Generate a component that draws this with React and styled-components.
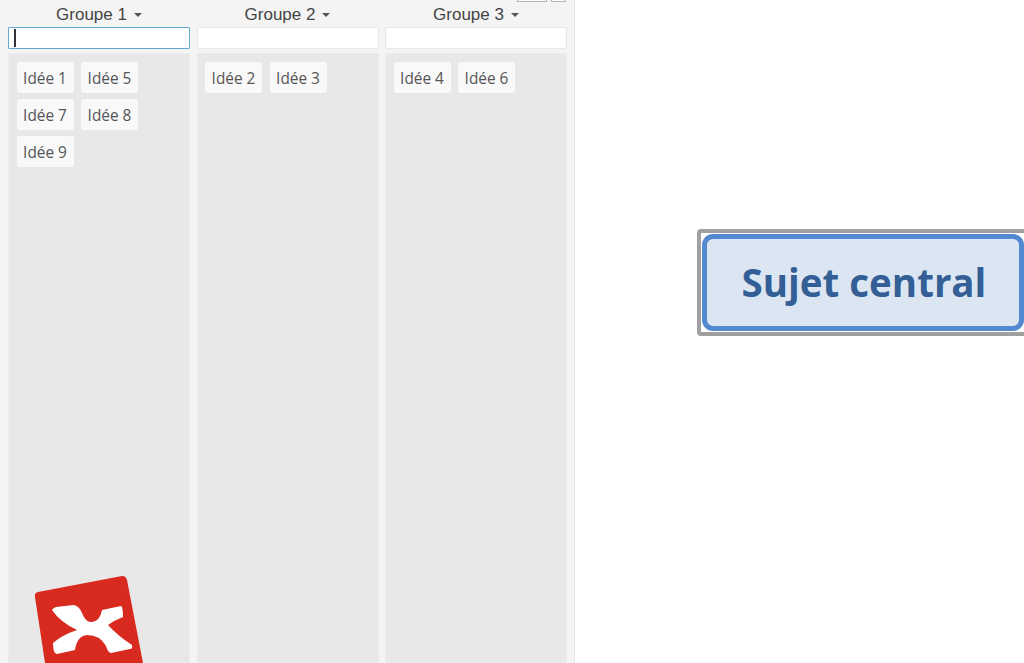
import React from 'react';
import styled, { createGlobalStyle } from 'styled-components';

const GlobalStyle = createGlobalStyle`
  html, body {
    margin: 0;
    padding: 0;
    height: 100%;
    background: #fff;
  }
  body {
    font-family: "Open Sans", "Liberation Sans", sans-serif;
    overflow: hidden;
  }
`

const Page = styled.div`
  display: flex;
  width: 1024px;
  height: 663px;
  overflow: hidden;
`

const Panel = styled.div`
  position: relative;
  box-sizing: border-box;
  flex: none;
  width: 575px;
  height: 663px;
  background: #f4f4f4;
  border-right: 1px solid #e4e4e4;
  padding: 0 8px 0 8px;
  display: flex;
  flex-direction: column;
  overflow: hidden;
`

const TitleStrip = styled.div`
  flex: none;
  height: 2px;
  display: flex;
  justify-content: flex-end;
  gap: 4px;
`

const WindowButton = styled.span`
  box-sizing: border-box;
  width: ${props => props.$width}px;
  height: 2px;
  border: 1px solid #b5b5b5;
  border-top: 0;
  background: #fafafa;
`

const Columns = styled.div`
  flex: 1;
  display: grid;
  grid-template-columns: repeat(3, 182px);
  column-gap: 6.5px;
  min-height: 0;
`

const Column = styled.div`
  display: flex;
  flex-direction: column;
  min-height: 0;
`

const Heading = styled.div`
  flex: none;
  height: 25px;
  display: flex;
  align-items: center;
  justify-content: center;
  gap: 7px;
  font-family: "Liberation Sans", Arial, sans-serif;
  font-size: 17px;
  color: #444;
`

const Caret = styled.span`
  width: 0;
  height: 0;
  margin-top: 1px;
  border-left: 4px solid transparent;
  border-right: 4px solid transparent;
  border-top: 4px solid #555;
`

const InputWrap = styled.div`
  position: relative;
  flex: none;
  height: 22px;
`

const FilterInput = styled.input`
  display: block;
  box-sizing: border-box;
  width: 100%;
  height: 22px;
  padding: 0 6px;
  margin: 0;
  background: #fff;
  border: 1px solid ${props => (props.$focused ? '#62a9d2' : '#e8e8e8')};
  border-radius: 1px;
  outline: none;
  caret-color: transparent;
  font-size: 14px;
`

const TextCursor = styled.span`
  position: absolute;
  left: 6px;
  top: 2px;
  width: 1.5px;
  height: 18px;
  background: #333;
`

const Tray = styled.div`
  flex: 1;
  margin-top: 4px;
  background: #e8e8e8;
  border: 1px solid #ececec;
  padding: 8px 7.5px;
  display: flex;
  flex-wrap: wrap;
  align-content: flex-start;
  gap: 6px 7.5px;
`

const Idea = styled.div`
  box-sizing: border-box;
  width: 57px;
  height: 31px;
  padding-top: 2px;
  display: flex;
  align-items: center;
  justify-content: center;
  background: #f9f9f9;
  border-radius: 3px;
  font-family: "Open Sans", sans-serif;
  font-size: 15.4px;
  color: #555;
`

const Logo = styled.svg`
  position: absolute;
  left: 30px;
  top: 570px;
  width: 120px;
  height: 93px;
`

const Canvas = styled.div`
  flex: 1;
  display: flex;
  align-items: flex-start;
  padding: 229px 0 0 122px;
  overflow: hidden;
`

const TopicFrame = styled.div`
  flex: none;
  box-sizing: border-box;
  width: 340px;
  height: 107px;
  padding: 1px;
  border: 4px solid #a0a0a0;
  border-radius: 4px;
  background: #fff;
`

const Topic = styled.div`
  box-sizing: border-box;
  width: 322px;
  height: 97px;
  padding: 0 0 2px 2px;
  display: flex;
  align-items: center;
  justify-content: center;
  background: #dce6f3;
  border: 5px solid #5289d0;
  border-radius: 11px;
  font-family: "Open Sans", sans-serif;
  font-weight: 700;
  font-size: 38.5px;
  color: #335f96;
`

const groups = [
  { name: 'Groupe 1', focused: true, ideas: ['Idée 1', 'Idée 5', 'Idée 7', 'Idée 8', 'Idée 9'] },
  { name: 'Groupe 2', ideas: ['Idée 2', 'Idée 3'] },
  { name: 'Groupe 3', ideas: ['Idée 4', 'Idée 6'] },
]

export default function App() {
  return (
    <Page>
      <GlobalStyle />
      <Panel>
        <TitleStrip>
          <WindowButton $width={30} />
          <WindowButton $width={15} />
        </TitleStrip>
        <Columns>
          {groups.map(group => (
            <Column key={group.name}>
              <Heading>
                {group.name}
                <Caret />
              </Heading>
              <InputWrap>
                <FilterInput $focused={group.focused} />
                {group.focused && <TextCursor />}
              </InputWrap>
              <Tray>
                {group.ideas.map(idea => <Idea key={idea}>{idea}</Idea>)}
              </Tray>
            </Column>
          ))}
        </Columns>
        <Logo viewBox="0 0 120 93">
          <path d="M5 27 Q4 23 8 22 L92 6 Q96 6 97 10 L113 93 L15 93 Z" fill="#d92a20" />
          <path d="M22 40 Q23 38 26 37 L44 35 Q49 36 52 43 Q56 53 62 52 Q70 51 72 40 L91 36 Q93 37 93 47 Q85 50 78 55 Q88 66 102 75 Q103 79 100 79 L81 83 Q78 83 76 76 Q70 65 57 65 Q47 66 45 80 L27 84 Q23 84 23 73 Q32 65 47 60 Q30 52 22 40 Z" fill="#fff" />
        </Logo>
      </Panel>
      <Canvas>
        <TopicFrame>
          <Topic>Sujet central</Topic>
        </TopicFrame>
      </Canvas>
    </Page>
  )
}
